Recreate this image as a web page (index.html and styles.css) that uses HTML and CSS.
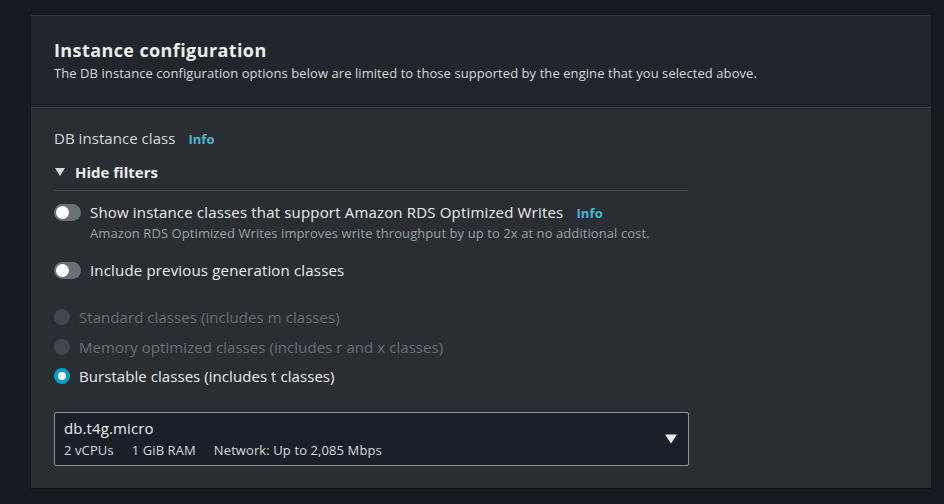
FILE: index.html
```html
<!DOCTYPE html>
<html>
<head>
<meta charset="utf-8">
<link rel="stylesheet" href="styles.css">
</head>
<body>
<div class="page">
  <section class="panel">
    <header class="panel-head">
      <h2 class="title">Instance configuration</h2>
      <p class="subtitle">The DB instance configuration options below are limited to those supported by the engine that you selected above.</p>
    </header>
    <div class="panel-body">
      <div class="field-label">DB instance class <span class="info">Info</span></div>
      <div class="filters">
        <div class="filters-head">
          <svg class="caret" width="10" height="8" viewBox="0 0 10 8"><path d="M0 0H10L5 8Z" fill="#d5dbdb"/></svg>
          <span>Hide filters</span>
        </div>
        <div class="toggle-row">
          <span class="toggle"><span class="knob"></span></span>
          <div class="toggle-text">
            <div class="toggle-label">Show instance classes that support Amazon RDS Optimized Writes <span class="info">Info</span></div>
            <div class="toggle-desc">Amazon RDS Optimized Writes improves write throughput by up to 2x at no additional cost.</div>
          </div>
        </div>
        <div class="toggle-row">
          <span class="toggle"><span class="knob"></span></span>
          <div class="toggle-text">
            <div class="toggle-label">Include previous generation classes</div>
          </div>
        </div>
      </div>
      <div class="radios">
        <div class="radio-row disabled"><span class="radio"></span><span>Standard classes (includes m classes)</span></div>
        <div class="radio-row disabled"><span class="radio"></span><span>Memory optimized classes (includes r and x classes)</span></div>
        <div class="radio-row"><span class="radio checked"></span><span>Burstable classes (includes t classes)</span></div>
      </div>
      <div class="select">
        <div class="select-text">
          <div class="select-value">db.t4g.micro</div>
          <div class="select-meta"><span>2 vCPUs</span><span>1 GiB RAM</span><span>Network: Up to 2,085 Mbps</span></div>
        </div>
        <svg class="select-caret" width="12" height="10" viewBox="0 0 12 10"><path d="M0 0.5H12L6 9.5Z" fill="#eaeded"/></svg>
      </div>
    </div>
  </section>
</div>
</body>
</html>
```
FILE: styles.css
```css
* { box-sizing: border-box; }
html, body { margin: 0; padding: 0; }
body {
  background: #161a21;
  font-family: "Open Sans", "Noto Sans", sans-serif;
  width: 944px;
  height: 504px;
  overflow: hidden;
}
.page {
  padding: 15px 13px 0 31px;
}
.panel {
  width: 900px;
  height: 473px;
  background: #2a2d32;
  box-shadow: 0 1px 1px rgba(0,0,0,0.4);
  border-top: 1px solid #30343b;
}
.panel-head {
  background: #22252b;
  padding: 22px 23px 0 23px;
  height: 92px;
  border-bottom: 1px solid #3c4048;
}
.title {
  margin: 0;
  font-size: 18px;
  letter-spacing: 0.4px;
  font-weight: 700;
  color: #eaeded;
  line-height: 24px;
}
.subtitle {
  margin: 2px 0 0 0;
  font-size: 13px;
  letter-spacing: 0.07px;
  color: #d5dbdb;
  line-height: 18px;
}
.panel-body {
  padding: 20px 23px 0 23px;
}
.field-label {
  font-size: 15px;
  letter-spacing: 0.05px;
  color: #d5dbdb;
  line-height: 20px;
}
.info {
  color: #44b9d6;
  font-weight: 700;
  font-size: 13px;
  margin-left: 9px;
}
.filters {
  width: 634px;
  margin-top: 13px;
}
.filters-head {
  display: flex;
  align-items: center;
  gap: 10px;
  font-size: 15px;
  font-weight: 700;
  color: #eaeded;
  line-height: 20px;
  padding: 0 0 8px 1px;
  border-bottom: 1px solid #414750;
}
.toggle-row {
  display: flex;
  align-items: flex-start;
  gap: 9px;
  margin-top: 11px;
}
.toggle-row + .toggle-row { margin-top: 18px; }
.toggle {
  width: 27px;
  height: 17px;
  border-radius: 9px;
  background: #687078;
  flex: none;
  margin-top: 2px;
  position: relative;
}
.knob {
  position: absolute;
  left: 2px;
  top: 2px;
  width: 13px;
  height: 13px;
  border-radius: 50%;
  background: #ffffff;
}
.toggle-label {
  font-size: 15px;
  letter-spacing: 0.17px;
  color: #eaeded;
  line-height: 20px;
}
.toggle-desc {
  font-size: 13px;
  letter-spacing: 0.08px;
  color: #95a5a6;
  line-height: 18px;
  margin-top: 1px;
}
.radios {
  margin-top: 27px;
  display: flex;
  flex-direction: column;
  gap: 9.5px;
}
.radio-row {
  display: flex;
  align-items: center;
  gap: 9px;
  font-size: 15px;
  letter-spacing: 0.06px;
  color: #eaeded;
  line-height: 20px;
}
.radio-row.disabled { color: #687078; }
.radio {
  width: 16px;
  height: 16px;
  border-radius: 50%;
  background: #414750;
  flex: none;
}
.radio.checked {
  background: #fff;
  border: 4.5px solid #00a1c9;
}
.select {
  margin-top: 26px;
  width: 635px;
  height: 54px;
  background: #1a2029;
  border: 1px solid #879596;
  border-radius: 2px;
  display: flex;
  align-items: center;
  padding: 0 11px 0 9px;
}
.select-text { flex: 1; margin-top: -1px; }
.select-value {
  font-size: 15px;
  letter-spacing: 0.1px;
  color: #eaeded;
  line-height: 20px;
}
.select-meta {
  font-size: 13px;
  letter-spacing: 0.1px;
  color: #d5dbdb;
  line-height: 20px;
  margin-top: 2px;
  display: flex;
  gap: 18px;
}
.select-caret { flex: none; }
```
